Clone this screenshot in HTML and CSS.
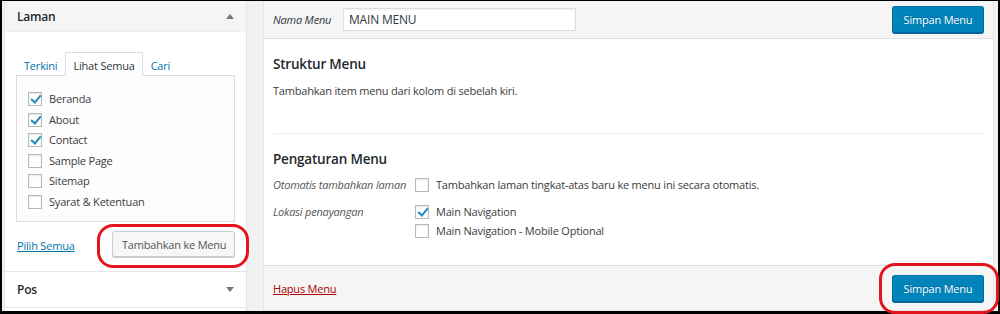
FILE: index.html
```html
<!DOCTYPE html>
<html lang="id">
<head>
    <meta charset="UTF-8">
    <title>Menu</title>
    <link rel="stylesheet" href="styles.css">
</head>
<body>
    <div class="frame">
        <aside class="side">
            <section class="box open">
                <div class="box-head">
                    <h3>Laman</h3>
                    <span class="arrow up"></span>
                </div>
                <div class="box-body">
                    <ul class="tabs">
                        <li>Terkini</li>
                        <li class="active">Lihat Semua</li>
                        <li>Cari</li>
                    </ul>
                    <div class="tab-panel">
                        <label class="check"><span class="cb on"></span>Beranda</label>
                        <label class="check"><span class="cb on"></span>About</label>
                        <label class="check"><span class="cb on"></span>Contact</label>
                        <label class="check"><span class="cb"></span>Sample Page</label>
                        <label class="check"><span class="cb"></span>Sitemap</label>
                        <label class="check"><span class="cb"></span>Syarat &amp; Ketentuan</label>
                    </div>
                    <div class="box-actions">
                        <a href="#">Pilih Semua</a>
                        <button class="btn">Tambahkan ke Menu</button>
                    </div>
                </div>
            </section>
            <section class="box">
                <div class="box-head closed">
                    <h3>Pos</h3>
                    <span class="arrow down"></span>
                </div>
            </section>
        </aside>

        <main class="menu-edit">
            <div class="menu-head">
                <label class="name-label">Nama Menu</label>
                <input class="name-input" type="text" value="MAIN MENU">
                <button class="btn primary">Simpan Menu</button>
            </div>
            <div class="menu-body">
                <h3>Struktur Menu</h3>
                <p>Tambahkan item menu dari kolom di sebelah kiri.</p>
                <hr>
                <h3>Pengaturan Menu</h3>
                <div class="setting">
                    <span class="setting-label">Otomatis tambahkan laman</span>
                    <div class="setting-opts">
                        <label class="check"><span class="cb"></span>Tambahkan laman tingkat-atas baru ke menu ini secara otomatis.</label>
                    </div>
                </div>
                <div class="setting">
                    <span class="setting-label">Lokasi penayangan</span>
                    <div class="setting-opts">
                        <label class="check"><span class="cb on"></span>Main Navigation</label>
                        <label class="check"><span class="cb"></span>Main Navigation - Mobile Optional</label>
                    </div>
                </div>
            </div>
            <div class="menu-foot">
                <a href="#" class="delete">Hapus Menu</a>
                <button class="btn primary">Simpan Menu</button>
            </div>
        </main>
    </div>

    <div class="mark mark-add"></div>
    <div class="mark mark-save"></div>
</body>
</html>
```

FILE: styles.css
```css
* {
    margin: 0;
    padding: 0;
    box-sizing: border-box;
}

body {
    position: relative;
    width: 1000px;
    height: 314px;
    overflow: hidden;
    font-family: 'Open Sans', sans-serif;
    font-size: 11px;
    letter-spacing: -0.2px;
    color: #3c3c3c;
    background-color: #fff;
}

.frame {
    display: flex;
    gap: 16px;
    height: 314px;
    padding: 0 4px 0 2px;
    border: 2px solid #000;
    border-top-width: 1px;
    border-bottom-width: 3px;
    background-color: #f1f1f1;
}

a {
    color: #0073aa;
}

/* left column */
.side {
    width: 243px;
    display: flex;
    flex-direction: column;
    border-left: 1px solid #e5e5e5;
    border-right: 1px solid #e5e5e5;
    background-color: #fff;
}

.box-head {
    display: flex;
    align-items: center;
    justify-content: space-between;
    height: 31px;
    padding: 0 12px 0 12px;
    background-color: #f5f5f5;
    border-bottom: 1px solid #eee;
}

.box-head h3 {
    font-size: 12px;
    font-weight: 600;
    color: #23282d;
}

.box-head.closed {
    height: 37px;
    background-color: #fff;
    border-top: 1px solid #e5e5e5;
    border-bottom: 1px solid #e5e5e5;
}

.arrow {
    width: 0;
    height: 0;
    border-left: 4px solid transparent;
    border-right: 4px solid transparent;
}

.arrow.up {
    border-bottom: 5px solid #72777c;
}

.arrow.down {
    border-top: 5px solid #72777c;
}

.box-body {
    height: 239px;
    padding: 20px 11px 0 11px;
}

.tabs {
    display: flex;
    list-style: none;
    height: 23px;
}

.tabs li {
    padding: 6px 8px 0 8px;
    color: #0073aa;
}

.tabs li.active {
    color: #32373c;
    background-color: #fff;
    border: 1px solid #dcdcdc;
    border-bottom: none;
    height: 24px;
    padding: 5px 7px 0 7px;
    position: relative;
    z-index: 1;
}

.tab-panel {
    height: 147px;
    padding: 16px 0 0 11px;
    border: 1px solid #dcdcdc;
    background-color: #fdfdfd;
    display: flex;
    flex-direction: column;
    gap: 6.6px;
}

.check {
    display: flex;
    align-items: center;
    gap: 7px;
    line-height: 14px;
    white-space: nowrap;
}

.cb {
    flex: none;
    position: relative;
    width: 14px;
    height: 14px;
    border: 1px solid #b4b9be;
    background-color: #fff;
    box-shadow: inset 0 1px 2px rgba(0, 0, 0, 0.1);
}

.cb.on::after {
    content: '';
    position: absolute;
    left: 3.5px;
    top: 0px;
    width: 4px;
    height: 8px;
    border-right: 2px solid #1e8cbe;
    border-bottom: 2px solid #1e8cbe;
    transform: rotate(40deg);
}

.box-actions {
    display: flex;
    align-items: center;
    justify-content: space-between;
    margin-top: 9px;
}

.box-actions a {
    margin-left: 1px;
    margin-top: 3px;
}

.btn {
    font-family: 'Open Sans', sans-serif;
    font-size: 11px;
    letter-spacing: -0.2px;
    white-space: nowrap;
    height: 26px;
    padding: 0 9px;
    color: #555;
    background-color: #f7f7f7;
    border: 1px solid #ccc;
    border-radius: 3px;
    box-shadow: 0 1px 0 #ccc;
}

.box-actions .btn {
    width: 123px;
}

.btn.primary {
    width: 92px;
    height: 27px;
    color: #fff;
    background-color: #0085ba;
    border-color: #0073aa #006799 #006799;
    box-shadow: 0 1px 0 #006799;
    text-shadow: 0 -1px 1px #006799;
}

/* right column */
.menu-edit {
    width: 731px;
    display: flex;
    flex-direction: column;
    border: 1px solid #e5e5e5;
    border-top: none;
    background-color: #fff;
}

.menu-head {
    display: flex;
    align-items: center;
    height: 38px;
    padding: 0 9px 1px 9px;
    background-color: #f5f5f5;
    border-bottom: 1px solid #dfdfdf;
}

.name-label {
    font-style: italic;
    color: #32373c;
    width: 70px;
}

.name-input {
    width: 233px;
    height: 23px;
    padding: 0 5px;
    font-family: 'Open Sans', sans-serif;
    font-size: 12px;
    letter-spacing: -0.2px;
    color: #32373c;
    border: 1px solid #ddd;
    box-shadow: inset 0 1px 2px rgba(0, 0, 0, 0.07);
}

.menu-head .btn {
    margin-left: auto;
}

.menu-body {
    height: 226px;
    padding: 14px 9px 0 9px;
}

.menu-body h3 {
    font-size: 13.5px;
    font-weight: 600;
    color: #23282d;
    line-height: 22px;
}

.menu-body p {
    margin-top: 8px;
}

.menu-body hr {
    border: none;
    border-top: 1px solid #eee;
    margin: 35px 0 14px 0;
}

.setting {
    display: flex;
    align-items: flex-start;
    margin-top: 8px;
}

.setting + .setting {
    margin-top: 13px;
}

.setting-label {
    width: 142px;
    font-style: italic;
    color: #555;
    line-height: 14px;
    white-space: nowrap;
}

.setting-opts {
    display: flex;
    flex-direction: column;
    gap: 5px;
}

.menu-foot {
    flex: 1;
    display: flex;
    align-items: center;
    justify-content: space-between;
    padding: 0 9px;
    background-color: #f5f5f5;
    border-top: 1px solid #dfdfdf;
}

.delete {
    color: #a00;
}

/* red highlight rings */
.mark {
    position: absolute;
    border: 3px solid #e3151c;
    border-radius: 16px;
}

.mark-add {
    left: 97px;
    top: 224px;
    width: 152px;
    height: 44px;
}

.mark-save {
    left: 879px;
    top: 263px;
    width: 120px;
    height: 51px;
}
```
